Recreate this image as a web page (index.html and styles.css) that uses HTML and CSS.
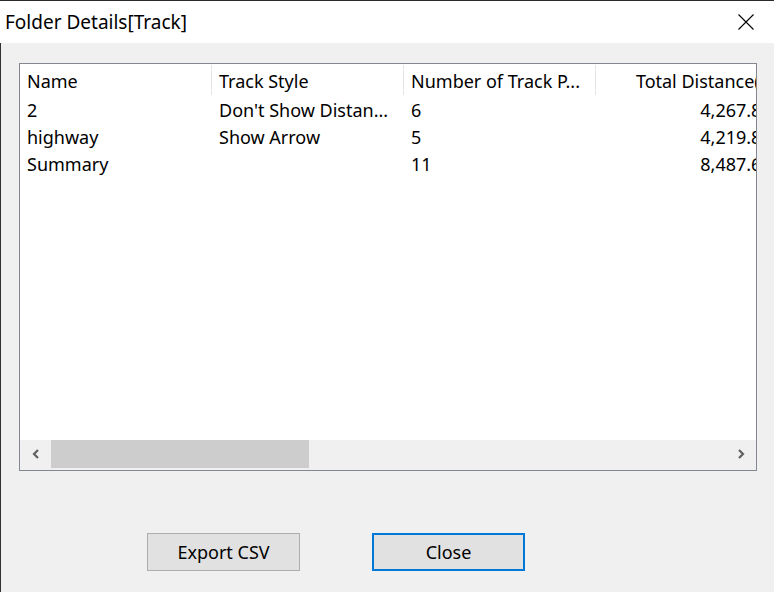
FILE: index.html
```html
<!DOCTYPE html>
<html lang="en">

<head>
    <meta charset="UTF-8">
    <title>Folder Details[Track]</title>
    <link rel="stylesheet" href="styles.css">
</head>

<body>
    <div class="window">
        <div class="titlebar">
            <span class="title">Folder Details[Track]</span>
            <svg class="close-icon" width="16" height="16" viewBox="0 0 16 16">
                <path d="M0.5 0.5 L15.5 15.5 M15.5 0.5 L0.5 15.5" stroke="#000" stroke-width="1.1" fill="none" />
            </svg>
        </div>

        <div class="content">
            <div class="listview">
                <div class="list-body">
                    <div class="row header">
                        <div class="cell">Name</div>
                        <div class="cell">Track Style</div>
                        <div class="cell">Number of Track P...</div>
                        <div class="cell num">Total Distance(m)</div>
                    </div>
                    <div class="row">
                        <div class="cell">2</div>
                        <div class="cell">Don't Show Distan...</div>
                        <div class="cell">6</div>
                        <div class="cell num">4,267.835</div>
                    </div>
                    <div class="row">
                        <div class="cell">highway</div>
                        <div class="cell">Show Arrow</div>
                        <div class="cell">5</div>
                        <div class="cell num">4,219.831</div>
                    </div>
                    <div class="row">
                        <div class="cell">Summary</div>
                        <div class="cell"></div>
                        <div class="cell">11</div>
                        <div class="cell num">8,487.666</div>
                    </div>
                </div>
                <div class="hscroll">
                    <div class="arrow">
                        <svg width="10" height="10" viewBox="0 0 10 10">
                            <path d="M7 1 L3 5 L7 9" stroke="#606060" stroke-width="2.2" fill="none" />
                        </svg>
                    </div>
                    <div class="thumb"></div>
                    <div class="track"></div>
                    <div class="arrow">
                        <svg width="10" height="10" viewBox="0 0 10 10">
                            <path d="M3 1 L7 5 L3 9" stroke="#606060" stroke-width="2.2" fill="none" />
                        </svg>
                    </div>
                </div>
            </div>

            <div class="buttons">
                <button class="btn">Export CSV</button>
                <button class="btn default">Close</button>
            </div>
        </div>
    </div>
</body>

</html>
```

FILE: styles.css
```css
* {
    box-sizing: border-box;
}

html,
body {
    margin: 0;
    padding: 0;
    background-color: #f0f0f0;
    font-family: 'Noto Sans', 'Open Sans', sans-serif;
    color: #000;
}

.window {
    width: 774px;
    height: 592px;
    border-top: 1px solid #2b2b2b;
    background-color: #f0f0f0;
    overflow: hidden;
}

.titlebar {
    height: 42px;
    background-color: #fff;
    display: flex;
    align-items: center;
    justify-content: space-between;
    padding: 0 20px 0 5px;
}

.title {
    font-size: 19px;
    margin-top: -1px;
}

.close-icon {
    display: block;
    margin-top: -1px;
}

.content {
    height: 549px;
    border-left: 1px solid #333;
    padding: 20px 0 0 18px;
}

.listview {
    width: 738px;
    height: 408px;
    border: 1px solid #828790;
    background-color: #fff;
    display: flex;
    flex-direction: column;
}

.list-body {
    flex: 1;
    overflow: hidden;
    padding-top: 1px;
}

.row {
    display: grid;
    grid-template-columns: 192px 192px 192px 192px;
    height: 27px;
    align-items: center;
    font-size: 18px;
    white-space: nowrap;
}

.row.header {
    height: 31px;
    align-items: start;
}

.cell {
    padding: 0 7px;
    overflow: hidden;
}

.header .cell {
    height: 30px;
    line-height: 32px;
    border-right: 1px solid #e5e5e5;
}

.header .cell.num {
    border-right: none;
}

.cell.num {
    text-align: right;
    padding-right: 6px;
}

.hscroll {
    height: 30px;
    background-color: #f0f0f0;
    display: flex;
}

.arrow {
    width: 31px;
    height: 28px;
    display: flex;
    align-items: center;
    justify-content: center;
}

.thumb {
    width: 258px;
    height: 28px;
    background-color: #cdcdcd;
}

.track {
    flex: 1;
}

.buttons {
    display: flex;
    gap: 72px;
    margin-top: 62px;
    padding-left: 128px;
}

.btn {
    width: 153px;
    height: 38px;
    background-color: #e1e1e1;
    border: 1px solid #adadad;
    font-family: inherit;
    font-size: 18px;
    color: #000;
    padding: 0;
}

.btn.default {
    border: 2px solid #0078d7;
}
```
